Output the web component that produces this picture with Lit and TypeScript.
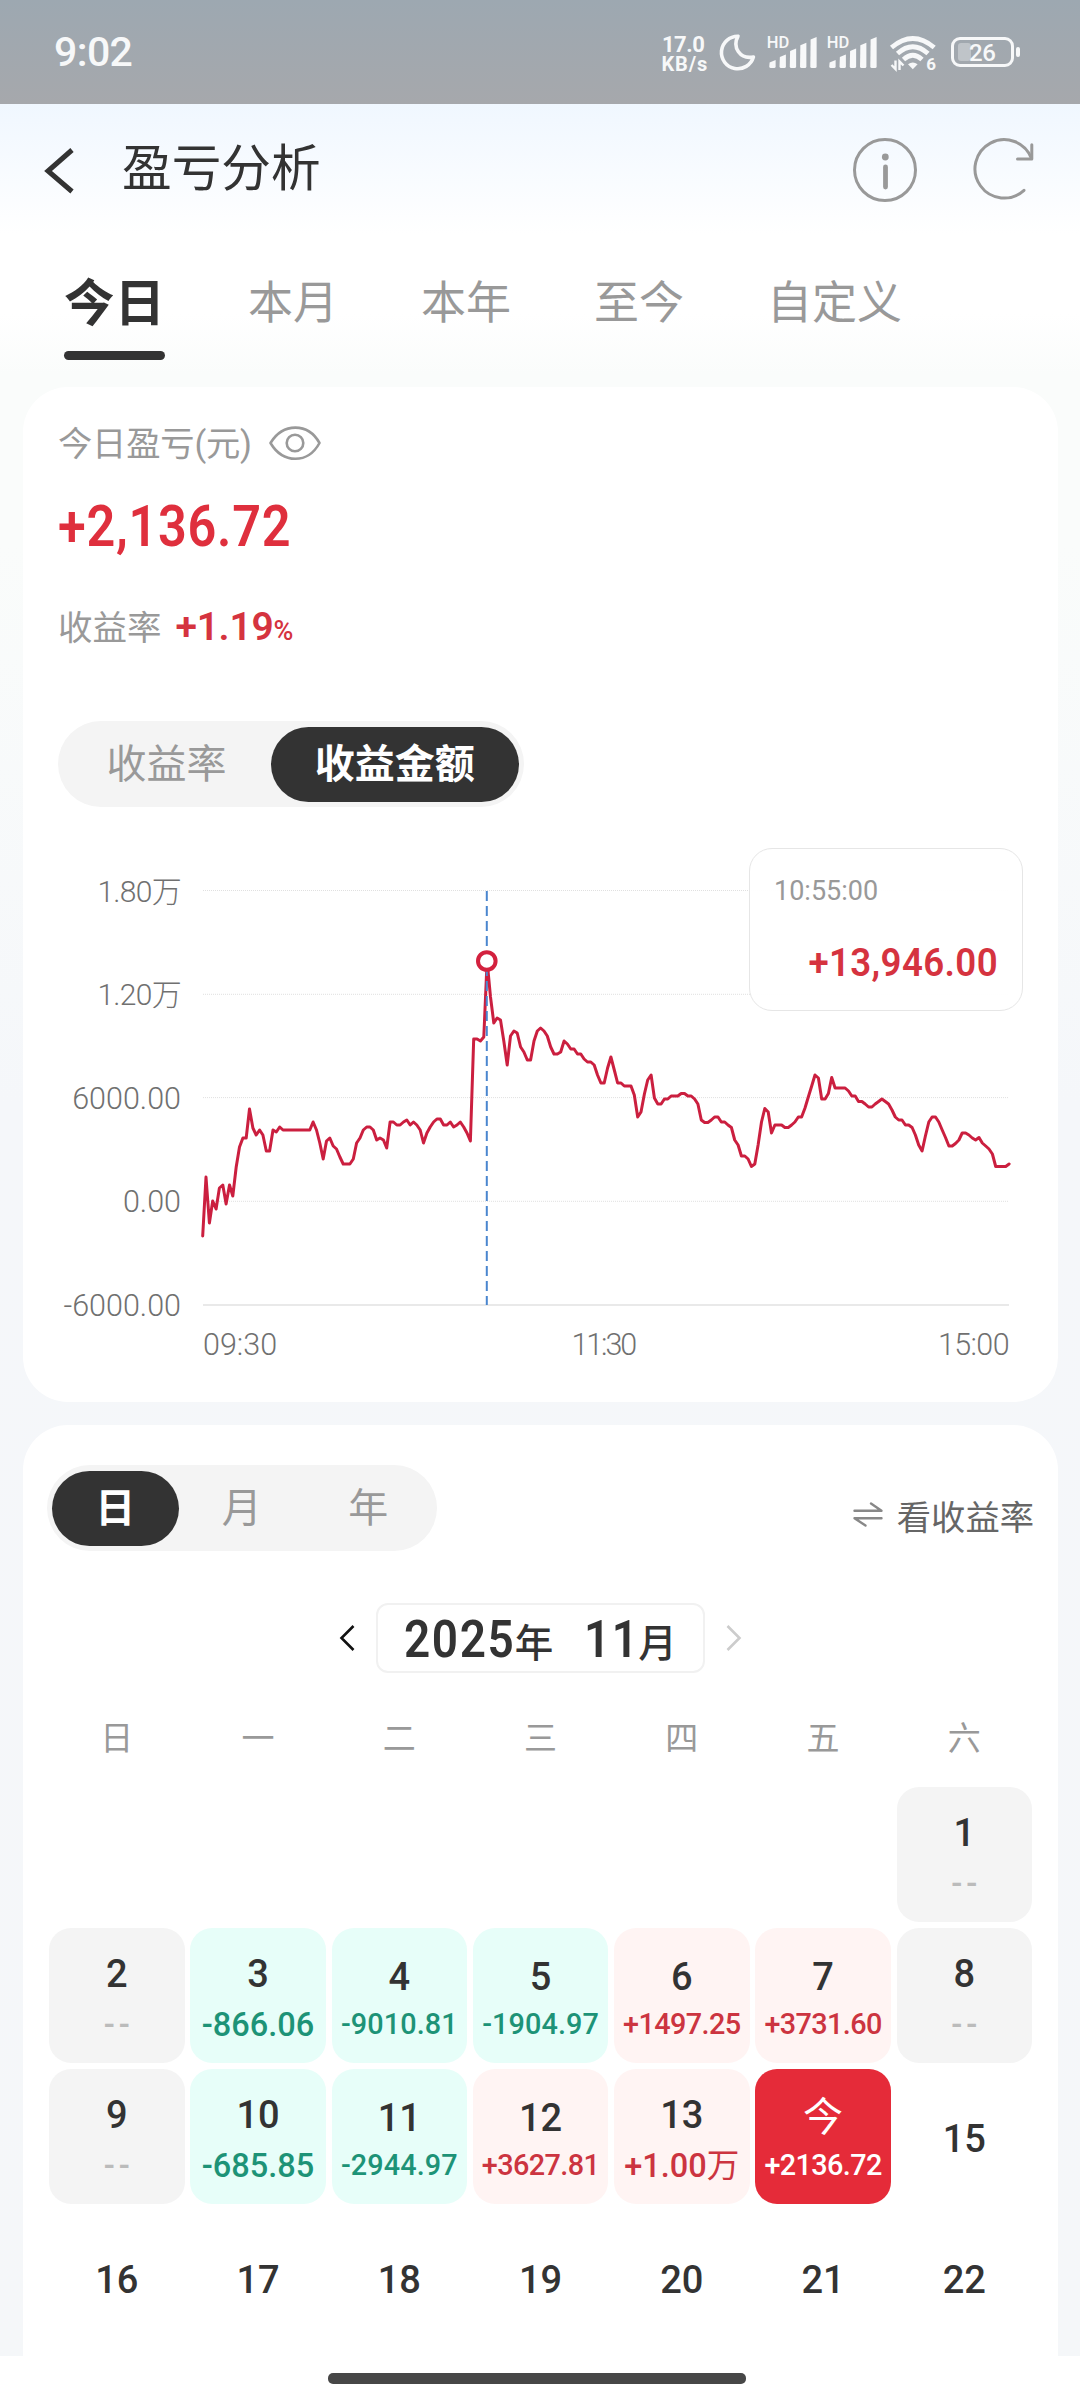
import { LitElement, html, svg, css, nothing } from "lit";
import { customElement, property } from "lit/decorators.js";
import { classMap } from "lit/directives/class-map.js";

/* Intraday curve: [minute, y] pairs, y measured inside the chart canvas. */
const CURVE: number[][] = [
  [0,396],[1,337],[2,383],[3,361],[4,369],[5,348],[6,345],[7,364],[8,345],[9,356],[10,327],[11,307],[12,298],[13,298],
  [14,269],[15,288],[16,295],[17,290],[18,295],[19,311],[20,311],[21,290],[22,292],[23,287],[24,290],[32,290],[33,282],
  [34,290],[35,303],[36,319],[37,301],[38,298],[39,306],[40,309],[41,317],[42,324],[44,324],[45,319],[46,303],[47,298],
  [48,290],[49,287],[50,287],[51,290],[52,300],[53,298],[54,300],[55,308],[56,282],[57,282],[58,285],[59,285],[60,282],
  [61,280],[62,285],[63,282],[64,285],[65,290],[66,303],[67,293],[68,287],[69,282],[70,279],[71,279],[72,285],[73,285],
  [74,282],[75,287],[76,285],[77,282],[78,287],[79,293],[80,301],[81,199],[82,199],[83,201],[84,197],[85,121],[86,157],
  [87,183],[88,178],[89,180],[90,201],[91,225],[92,196],[93,191],[94,193],[95,207],[96,212],[97,220],[98,220],[99,201],
  [100,191],[101,188],[102,191],[103,196],[104,207],[105,214],[106,214],[107,212],[108,201],[109,204],[110,209],
  [111,209],[112,214],[113,214],[114,219],[115,222],[116,222],[117,225],[118,235],[119,243],[120,243],[121,228],
  [122,217],[123,230],[124,243],[125,243],[126,246],[128,246],[129,255],[130,277],[131,272],[132,254],[133,240],
  [134,235],[135,258],[136,264],[137,264],[138,259],[139,259],[140,256],[142,256],[143,253.5],[144,253.5],[145,256],
  [146,256],[147,259],[148,264],[149,280],[150,282.5],[151,282.5],[152,280],[153,277],[154,277],[155,282],[156,282],
  [157,285],[158,287.5],[159,300],[160,305],[161,316],[162,316],[163,319],[164,326.5],[165,324],[166,305],[167,282],
  [168,268.5],[169,272],[170,293],[171,285],[173,285],[174,287.5],[175,287.5],[176,285],[177,282],[178,277],[179,277],
  [180,268],[181,257],[182,246],[183,235],[184,238],[185,259],[186,259],[187,253.5],[188,237.5],[189,248],[192,248],
  [193,251],[194,256],[195,256],[196,261.5],[197,261.5],[198,264],[199,267],[200,267],[201,264],[202,261.5],[203,259],
  [204,261.5],[205,264],[206,270],[207,277],[208,280],[209,280],[210,285],[211,285],[212,287.5],[213,295],[214,305],
  [215,311],[216,296],[217,282],[218,277],[219,277],[220,282],[221,290],[222,297.5],[223,306],[224,306],[225,303.5],
  [226,300],[227,293],[228,293],[229,295],[230,298],[231,300],[232,297.5],[233,303],[234,306],[235,309],[236,314],
  [237,326.5],[240,326.5],[241,324],
];

const X0 = 179.7;
const STEP = 3.346;

interface Day {
  label: string;
  value?: string;
  kind?: "rest" | "loss" | "gain" | "today" | "blank";
}

const DAYS: Day[] = [
  ...Array.from({ length: 6 }, (): Day => ({ label: "", kind: "blank" })),
  { label: "1", value: "--", kind: "rest" },
  { label: "2", value: "--", kind: "rest" },
  { label: "3", value: "-866.06", kind: "loss" },
  { label: "4", value: "-9010.81", kind: "loss" },
  { label: "5", value: "-1904.97", kind: "loss" },
  { label: "6", value: "+1497.25", kind: "gain" },
  { label: "7", value: "+3731.60", kind: "gain" },
  { label: "8", value: "--", kind: "rest" },
  { label: "9", value: "--", kind: "rest" },
  { label: "10", value: "-685.85", kind: "loss" },
  { label: "11", value: "-2944.97", kind: "loss" },
  { label: "12", value: "+3627.81", kind: "gain" },
  { label: "13", value: "+1.00万", kind: "gain" },
  { label: "今", value: "+2136.72", kind: "today" },
  { label: "15" },
  ...["16", "17", "18", "19", "20", "21", "22"].map((label): Day => ({ label })),
];

const base = css`
  * { box-sizing: border-box; }
  svg { display: block; flex: none; overflow: visible; }
`;

@customElement("status-bar")
class StatusBar extends LitElement {
  static styles = [base, css`
    :host {
      display: flex; height: 104px; padding: 0 58px 0 54px; justify-content: space-between;
      background: linear-gradient(#9da8b1, #a6a8ac); color: #f7f8f9;
    }
    .time { font-size: 41px; line-height: 104px; font-weight: 500; letter-spacing: -0.6px; }
    .icons { font-weight: 700; }
    .hd { font-size: 16.5px; font-weight: 500; }
    .rate { font-size: 22px; letter-spacing: -0.5px; }
    .unit { font-size: 20px; letter-spacing: 0.9px; }
    .wifi { font-size: 17px; }
    .level { font-size: 24px; font-weight: 500; letter-spacing: -0.5px; }
  `];

  private signal(x: number) {
    const tops = [60.5, 55, 49, 43.3, 37.5];
    return svg`<g transform="translate(${x} 0)">
      <text class="hd" x="-2.5" y="48">HD</text>
      ${tops.map((t, i) => svg`<path d="M${i * 10.25 + 0.3} ${t + 2}L${i * 10.25 + 6.3} ${t - 0.5}V66.5Q${i * 10.25 + 6.3} 68 ${i * 10.25 + 4.8} 68H${i * 10.25 + 1.5}Q${i * 10.25} 68 ${i * 10.25} 66.5Z"/>`)}
    </g>`;
  }

  render() {
    return html`
      <span class="time">9:02</span>
      <svg class="icons" width="362" height="104" viewBox="660 0 362 104" fill="currentColor">
        <text class="rate" x="662" y="51.5">17.0</text>
        <text class="unit" x="661.5" y="70.5">KB/s</text>
        <path d="M738 36.2A16.3 16.3 0 1 0 753.4 57C740 59.5 732 47.5 738 36.2Z" fill="none" stroke="currentColor" stroke-width="3.6" stroke-linejoin="round"/>
        ${this.signal(769.3)}
        ${this.signal(829.3)}
        <g fill="none" stroke="currentColor" stroke-width="4.8">
          <path d="M891.5 47.5Q912.8 29.5 934.2 47.5"/>
          <path d="M897.5 53.5Q912.8 40 928 53.5"/>
          <path d="M903.5 59.5Q912.8 51 922 59.5"/>
        </g>
        <path d="M908 64.3Q912.8 60.5 917.6 64.3L912.8 69.2Z"/>
        <path d="M895.5 60.5V69L891.5 65M899.5 70V61.5L903.5 65.5" fill="none" stroke="currentColor" stroke-width="2.4"/>
        <text class="wifi" x="926.3" y="70">6</text>
        <rect x="952.5" y="38.5" width="60" height="27" rx="7.5" fill="none" stroke="currentColor" stroke-width="3"/>
        <rect x="958" y="43" width="13" height="18" rx="3" opacity=".35"/>
        <rect x="1016" y="47" width="4" height="10" rx="2"/>
        <text class="level" x="969" y="61">26</text>
      </svg>`;
  }
}

@customElement("page-header")
class PageHeader extends LitElement {
  static styles = [base, css`
    :host { display: block; color: #333; }
    .bar { display: flex; align-items: center; height: 132px; padding: 0 47px 0 45px; }
    .title { flex: 1; margin: 0 0 3px 47px; font-size: 49.7px; line-height: 60px; font-weight: 400; }
    .refresh { margin-left: 56px; }
    .tabs { display: flex; gap: 83px; height: 124px; padding: 37px 0 0 64px; }
    .tab { font-size: 45px; line-height: 62px; color: #999; }
    .active { font-size: 50.5px; font-weight: 700; color: #333; }
    .active::after { content: ""; display: block; height: 9px; margin-top: 16px; border-radius: 5px; background: #333; }
  `];

  render() {
    return html`
      <div class="bar">
        <svg width="30" height="50" viewBox="46 145 30 50" fill="none" stroke="#333" stroke-width="5"><path d="M73 150L49 171L73 191.5"/></svg>
        <div class="title">盈亏分析</div>
        <svg width="64" height="64" viewBox="853 138 64 64" fill="none" stroke="#999" stroke-width="3">
          <circle cx="885" cy="170" r="30.5"/>
          <circle cx="885.3" cy="157" r="3.4" fill="#999" stroke="none"/>
          <path d="M885.5 167V187" stroke-width="4.8" stroke-linecap="round"/>
        </svg>
        <svg class="refresh" width="60" height="64" viewBox="973 138 60 64" fill="none" stroke="#999" stroke-width="3" stroke-linecap="round" stroke-linejoin="round">
          <path d="M1024 190.3A29.2 29.2 0 1 1 1031.5 158.5"/>
          <path d="M1031.8 144.8V159H1017.5"/>
        </svg>
      </div>
      <div class="tabs">
        ${["今日", "本月", "本年", "至今", "自定义"].map((t, i) => html`<div class=${classMap({ tab: true, active: i === 0 })}>${t}</div>`)}
      </div>`;
  }
}

@customElement("segment-switch")
class SegmentSwitch extends LitElement {
  @property({ attribute: false }) items: string[] = [];
  @property({ type: Number }) selected = 0;
  @property({ type: Boolean, reflect: true }) wide = false;

  static styles = [base, css`
    :host { display: flex; width: max-content; height: 86px; padding: 5.5px; border-radius: 44px; background: #f4f4f4; font-size: 40px; }
    .item { width: 126.5px; height: 75px; line-height: 76px; border-radius: 38px; text-align: center; color: #999; }
    .on { background: #333; color: #fff; font-weight: 700; }
    :host([wide]) { padding: 5.5px 4.5px; }
    :host([wide]) .item { width: 208px; }
    :host([wide]) .on { width: 248.5px; }
  `];

  render() {
    return this.items.map((t, i) => html`<div class=${classMap({ item: true, on: i === this.selected })}>${t}</div>`);
  }
}

@customElement("profit-chart")
class ProfitChart extends LitElement {
  static styles = [base, css`
    :host { display: block; position: relative; }
    .axis { font-size: 30.5px; font-weight: 300; fill: #707070; }
    .wan { font-size: 30px; letter-spacing: -0.7px; }
    .hour { letter-spacing: -0.6px; }
    .tip {
      position: absolute; left: 726px; top: 7.5px; width: 274px; height: 163px; padding: 22px 24px 0;
      border: 1.5px solid #e6e6e6; border-radius: 23px; background: #fffffff5;
    }
    .at { font-size: 27px; line-height: 40px; color: #999; letter-spacing: 0; }
    .amount { margin-top: 28px; font-size: 39px; line-height: 48px; font-weight: 600; color: #d5333f; letter-spacing: 0.4px; white-space: nowrap; text-align: right; transform: scaleX(0.94); transform-origin: right; }
  `];

  render() {
    const line = CURVE.map(([m, y]) => `${(X0 + m * STEP).toFixed(1)},${y}`).join(" ");
    const rows: [string, number][] = [["1.80万", 50.5], ["1.20万", 154.3], ["6000.00", 257.6], ["0.00", 361.3], ["-6000.00", 465]];
    const peak = 463.8;
    return html`
      <svg width="1035" height="561" viewBox="0 0 1035 561">
        ${rows.map(([label, y], i) => svg`
          <text class=${i < 2 ? "axis wan" : "axis"} x="158" y=${y + 11} text-anchor="end">${label}</text>
          <path d="M180 ${y}H986" stroke=${i === 4 ? "#e9e9e9" : "#e0e0e0"} stroke-width=${i === 4 ? 2 : 1} stroke-dasharray=${i === 4 ? "none" : "1 1"}/>`)}
        <text class="axis" x="180" y="515">09:30</text>
        <text class="axis hour" x="581" y="515" text-anchor="middle" textLength="65">11:30</text>
        <text class="axis hour" x="986" y="515" text-anchor="end">15:00</text>
        <polyline points=${line} fill="none" stroke="#cb1f3f" stroke-width="3" stroke-linejoin="round" stroke-linecap="round"/>
        <path d="M${peak} 51V465" stroke="#4a86cf" stroke-width="2" stroke-dasharray="10 5"/>
        <circle cx=${peak} cy="121" r="8.8" fill="#fff" stroke="#d3213e" stroke-width="4"/>
      </svg>
      <div class="tip">
        <div class="at">10:55:00</div>
        <div class="amount">+13,946.00</div>
      </div>`;
  }
}

@customElement("profit-summary")
class ProfitSummary extends LitElement {
  static styles = [base, css`
    :host { display: block; height: 1014.5px; border-radius: 45px; background: #fff; }
    .head { display: flex; flex-direction: column; height: 453px; padding: 29px 35px 0; }
    .label { display: flex; align-items: center; height: 50px; font-size: 34.3px; letter-spacing: -0.2px; color: #999; }
    .eye { margin: 4px 0 0 17px; }
    .total { margin-top: 31px; font-size: 57px; line-height: 60px; font-weight: 600; letter-spacing: 0.8px; color: #df2f3d; transform: scaleX(0.885); transform-origin: left; }
    .ratio { display: flex; align-items: baseline; margin-top: 45px; height: 50px; line-height: 50px; font-size: 34.5px; color: #999; }
    .percent { margin-left: 14px; font-size: 39px; font-weight: 600; letter-spacing: -0.3px; color: #d5333f; }
    .sign { font-size: 27px; font-weight: 500; color: #d5333f; }
    .switch { margin-top: 69px; }
  `];

  render() {
    return html`
      <div class="head">
        <div class="label">今日盈亏(元)
          <svg class="eye" width="52" height="36" viewBox="269 425 52 36" fill="none" stroke="#999" stroke-width="2.6">
            <path d="M270.5 443C283 422.5 308 422.5 319.5 443C308 464 283 464 270.5 443Z" stroke-linejoin="round"/>
            <circle cx="295" cy="443" r="8.3"/>
          </svg>
        </div>
        <div class="total">+2,136.72</div>
        <div class="ratio">收益率<span class="percent">+1.19</span><span class="sign">%</span></div>
        <segment-switch class="switch" wide .items=${["收益率", "收益金额"]} .selected=${1}></segment-switch>
      </div>
      <profit-chart></profit-chart>`;
  }
}

@customElement("profit-calendar")
class ProfitCalendar extends LitElement {
  static styles = [base, css`
    :host { display: block; height: 931px; padding: 40px 24px 0; border-radius: 45px 45px 0 0; background: #fff; color: #333; overflow: hidden; }
    .top { display: flex; justify-content: space-between; height: 87px; margin-left: -0.5px; }
    .swap { display: flex; align-items: center; gap: 14px; height: 100px; font-size: 34.3px; color: #666; }
    .month { display: flex; align-items: center; justify-content: center; gap: 22px; margin-top: 51px; }
    .picker { display: flex; align-items: baseline; width: 329px; height: 70px; padding-left: 26px; line-height: 69px; border: 2px solid #f1f1f1; border-radius: 12px; font-size: 38.5px; font-weight: 500; white-space: nowrap; }
    .num { font-size: 51px; font-weight: 600; letter-spacing: 1.8px; margin-right: -13px; transform: scaleX(0.9); transform-origin: left; }
    .second { margin: 0 -8px 0 31px; }
    .han { padding-bottom: 3px; margin-top: -3px; }
    .grid { display: grid; grid-template-columns: repeat(7, 135.5px); gap: 6px 5.78px; width: 984px; margin-left: 2px; }
    .week { margin-top: 42px; height: 72px; line-height: 48px; font-size: 33px; color: #999; text-align: center; }
    .cell { display: flex; flex-direction: column; align-items: center; justify-content: center; height: 135px; border-radius: 22px; font-size: 38px; font-weight: 500; line-height: 44px; }
    .future { padding-top: 4px; }
    .filled { justify-content: flex-start; padding-top: 24px; }
    .rest { background: #f4f4f4; }
    .loss { background: #e7fef9; }
    .gain { background: #fff4f3; }
    .today { background: #e52b39; color: #fff; }
    .today .day { font-size: 40px; font-weight: 400; padding-top: 3px; }
    .value { margin-top: 7px; font-size: 32.5px; line-height: 44px; white-space: nowrap; }
    .small { font-size: 28.8px; letter-spacing: 0.1px; }
    .gain .small, .today .small { letter-spacing: -0.6px; }
    .low { padding-top: 27px; }
    .low .value { margin-top: 3px; }
    .today .value { margin-top: 3px; }
    .dashes { font-weight: 500; color: #bbb; letter-spacing: 4px; padding-left: 4px; }
    .unit { font-weight: 400; }
    .loss .value { color: #1d9377; }
    .gain .value { color: #cc3440; }
  `];

  private cell(d: Day) {
    const value = d.value ?? "";
    const small = value.length > 7;
    const scaled = value.endsWith("万");
    const classes = { cell: true, filled: !!value, low: small && d.kind !== "today", [d.kind ?? "future"]: true };
    return html`<div class=${classMap(classes)}>
      <div class="day">${d.label}</div>
      ${value
        ? html`<div class=${classMap({ value: true, small, dashes: value === "--" })}>${scaled ? value.slice(0, -1) : value}${scaled ? html`<span class="unit">万</span>` : nothing}</div>`
        : nothing}
    </div>`;
  }

  render() {
    return html`
      <div class="top">
        <segment-switch .items=${["日", "月", "年"]} .selected=${0}></segment-switch>
        <div class="swap">
          <svg width="30" height="26" viewBox="853 1506 30 26" fill="none" stroke="#888" stroke-width="2.4" stroke-linecap="round" stroke-linejoin="round">
            <path d="M854.5 1514.8H881.5L871 1507.5M881.5 1522.2H854.5L865.5 1529.5"/>
          </svg>看收益率
        </div>
      </div>
      <div class="month">
        <svg width="14" height="26" viewBox="0 0 14 26" fill="none" stroke="#111" stroke-width="2.6"><path d="M13.5 1L1.5 13L13.5 25"/></svg>
        <div class="picker"><span class="num">2025</span><span>年</span><span class="num second">11</span><span>月</span></div>
        <svg width="14" height="26" viewBox="0 0 14 26" fill="none" stroke="#ccc" stroke-width="2.6"><path d="M0.5 1L12.5 13L0.5 25"/></svg>
      </div>
      <div class="grid week">${["日", "一", "二", "三", "四", "五", "六"].map((w) => html`<span>${w}</span>`)}</div>
      <div class="grid">${DAYS.map((d) => this.cell(d))}</div>`;
  }
}

@customElement("app-root")
class AppRoot extends LitElement {
  static styles = [base, css`
    :host { display: block; width: 1080px; height: 2400px; overflow: hidden; background: #fff; font-family: Roboto, "Noto Sans CJK SC", sans-serif; }
    .page { display: flex; flex-direction: column; height: 2252px; background: linear-gradient(#f0f7ff, #fff 130px, #fff 210px, #fafcfb 270px, #fafcfb 440px, #f5f7fa 1000px, #f5f7f9); }
    .cards { display: flex; flex-direction: column; gap: 23.5px; padding: 27px 22px 0 23px; }
    .nav { display: flex; justify-content: center; height: 44px; padding: 17px 6px 0 0; }
    .pill { width: 418px; height: 10.5px; border-radius: 5px; background: #474747; }
  `];

  render() {
    return html`
      <status-bar></status-bar>
      <div class="page">
        <page-header></page-header>
        <div class="cards">
          <profit-summary></profit-summary>
          <profit-calendar></profit-calendar>
        </div>
      </div>
      <div class="nav"><div class="pill"></div></div>`;
  }
}
